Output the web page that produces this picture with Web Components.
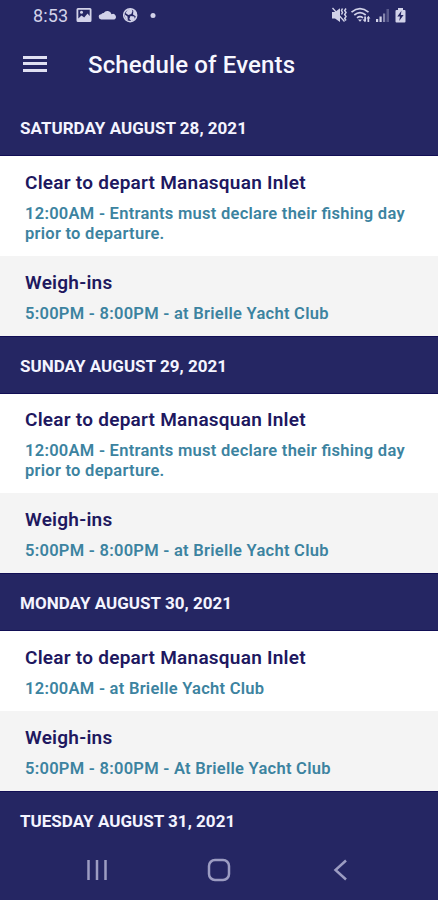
<!DOCTYPE html>
<html lang="en">
<head>
<meta charset="utf-8">
<meta name="viewport" content="width=device-width, initial-scale=1">
<title>Schedule of Events</title>
<style>
  :root {
    --navy: #252663;
    --navy-edge: #120f55;
    --heading: #20185f;
    --detail: #3c83a0;
    --status: #d2d2e9;
    --nav: #9c9cc2;
  }
  body {
    margin: 0;
    background: var(--navy);
    font-family: Roboto, "Liberation Sans", sans-serif;
  }
</style>
</head>
<body>
<app-screen>
  <status-bar slot="top">8:53</status-bar>
  <app-header slot="top">Schedule of Events</app-header>
  <event-list></event-list>
  <nav-bar slot="bottom"></nav-bar>
</app-screen>

<script>
// 1. Data: events for each day
const scheduleData = [
  { day: 'Saturday August 28, 2021', events: [
    { title: 'Clear to depart Manasquan Inlet', detail: '12:00AM - Entrants must declare their fishing day prior to departure.' },
    { title: 'Weigh-ins', detail: '5:00PM - 8:00PM - at Brielle Yacht Club' }
  ] },
  { day: 'Sunday August 29, 2021', events: [
    { title: 'Clear to depart Manasquan Inlet', detail: '12:00AM - Entrants must declare their fishing day prior to departure.' },
    { title: 'Weigh-ins', detail: '5:00PM - 8:00PM - at Brielle Yacht Club' }
  ] },
  { day: 'Monday August 30, 2021', events: [
    { title: 'Clear to depart Manasquan Inlet', detail: '12:00AM - at Brielle Yacht Club' },
    { title: 'Weigh-ins', detail: '5:00PM - 8:00PM - At Brielle Yacht Club' }
  ] },
  { day: 'Tuesday August 31, 2021', events: [] }
];

// 2. Base class: puts the markup in an open shadow root
class BaseElement extends HTMLElement {
  constructor() {
    super();
    this.attachShadow({ mode: 'open' });
    this.shadowRoot.innerHTML = this.constructor.markup;
  }
}

// 3. Screen layout
class AppScreen extends BaseElement {
  static markup = `
    <style>
      :host {
        display: flex;
        flex-direction: column;
        height: 900px;
        overflow: hidden;
        background: var(--navy);
      }
      main { flex: 1; min-height: 0; overflow: hidden; }
    </style>
    <slot name="top"></slot>
    <main><slot></slot></main>
    <slot name="bottom"></slot>
  `;
}
customElements.define('app-screen', AppScreen);

// 4. Status bar
class StatusBar extends BaseElement {
  static markup = `
    <style>
      :host {
        display: flex;
        justify-content: space-between;
        align-items: center;
        height: 31px;
        padding: 0 31px 0 33px;
        box-sizing: border-box;
        color: var(--status);
        font-size: 18px;
        line-height: 31px;
      }
      .group { display: flex; align-items: center; }
      .time { width: 43px; letter-spacing: 0.1px; }
      svg { display: block; fill: currentColor; }
    </style>
    <div class="group">
      <span class="time"><slot></slot></span>
      <svg width="16" height="32" viewBox="0 0 16 32">
        <path fill-rule="evenodd" d="M2 8h12q1.500 0 1.500 1.500v11q0 1.500-1.500 1.500H2q-1.500 0-1.500-1.500v-11q0-1.500 1.500-1.500zM2.300 9.800v8.700l3.200-3 2.700 2 3.300-4 2.200 2.500V9.800z"/>
        <circle cx="5.500" cy="12.300" r="1.500"/>
      </svg>
      <svg width="31" height="32" viewBox="0 0 31 32">
        <path d="M9.500 19.500a2.600 2.600 0 0 1-.3-5.200 3 3 0 0 1 2.500-1.300 4.300 4.300 0 0 1 7.800 1.200 2.700 2.700 0 0 1 2.800 5.300z"/>
      </svg>
      <svg width="16" height="32" viewBox="0 0 16 32">
        <circle cx="7.200" cy="15.200" r="6.500" fill="none" stroke="currentColor" stroke-width="1.500"/>
        <path d="M4.500 10l3.500-1.500 1.500 2.500-1.200 3-3 1L2.500 13zM10.500 9.500l3 3-.5 4-3-2zM1.200 14l3.300 2.500.3 3.800-2-.8zM7.500 16l3.700.5.800 3-3.500 1.800-2.200-2.200z"/>
      </svg>
      <svg width="18" height="32" viewBox="0 0 18 32"><circle cx="14" cy="15.500" r="2.500"/></svg>
    </div>
    <div class="group">
      <svg width="76" height="32" viewBox="0 0 76 32">
        <!-- vibrate -->
        <path d="M1 12h3l5-3.700V22l-5-3.500H1z"/>
        <path d="M1.500 8l12 13.500" stroke="currentColor" stroke-width="1.300"/>
        <path d="M11.500 8.500l-1 2 1 2-1 2M15 8.500l-1.300 2 1.300 2-1.300 2 1.300 2-1.300 2 1.300 2" fill="none" stroke="currentColor" stroke-width="1.500"/>
        <!-- wifi -->
        <g fill="none" stroke="currentColor" stroke-width="1.700">
          <path d="M20.500 12.200q8.500-7 17 0M23.300 15q5.700-4.600 11.400 0M26 17.800q3-2.400 6 0"/>
        </g>
        <path d="M27 19.500h4l-2 2.300z"/>
        <path d="M33.200 16.500v3h-1.700l2.500 2.800 1-1.200v-4.600zM36.500 22v-3.500h-1l1.900-2.700 2 2.700h-1.200V22z"/>
        <!-- signal -->
        <path d="M45 19h2.200v3H45zM48.500 16.500h2.200V22h-2.200z"/>
        <path d="M52 13.500h2.200V22H52z" opacity=".55"/>
        <path d="M55.500 9h2.500v13h-2.500z" opacity=".3"/>
        <!-- battery -->
        <path d="M67 8h5v2h1.500q1 0 1 1v10.500q0 1-1 1h-8q-1 0-1-1V11q0-1 1-1H67z"/>
        <path d="M70.500 10.800l-4.200 5.700H69l-.8 4.500 4.400-6h-2.800z" fill="var(--navy)"/>
      </svg>
    </div>
  `;
}
customElements.define('status-bar', StatusBar);

// 5. Header with the menu button
class AppHeader extends BaseElement {
  static markup = `
    <style>
      :host {
        display: flex;
        align-items: center;
        height: 68px;
        padding-left: 23px;
        color: #f7f7ff;
        font-size: 24px;
        font-weight: 500;
        letter-spacing: 0.14px;
      }
      .menu {
        display: flex;
        flex-direction: column;
        gap: 3.500px;
        width: 23.500px;
        margin-right: 41.500px;
        padding-bottom: 3px;
      }
      .menu i { height: 3px; background: #e0e0f2; }
    </style>
    <div class="menu"><i></i><i></i><i></i></div>
    <slot></slot>
  `;
}
customElements.define('app-header', AppHeader);

// 6. Day band
class DayHeader extends BaseElement {
  static markup = `
    <style>
      :host {
        display: flex;
        align-items: center;
        height: 58px;
        box-sizing: border-box;
        padding: 2px 20px 0;
        background: var(--navy);
        border-top: 1px solid var(--navy-edge);
        border-bottom: 1px solid var(--navy-edge);
        color: #f4f4ff;
        font-size: 17px;
        font-weight: 700;
        letter-spacing: 0.02px;
        text-transform: uppercase;
      }
      :host([first]) { border-top-color: transparent; height: 57px; padding-top: 1px; background-clip: padding-box; }
      :host([last]) { border-bottom-color: transparent; }
    </style>
    <slot></slot>
  `;
}
customElements.define('day-header', DayHeader);

// 7. One event
class EventItem extends BaseElement {
  static markup = `
    <style>
      :host {
        display: block;
        box-sizing: border-box;
        padding: 14.800px 24px 12px 25px;
        background: #fff;
        font-feature-settings: "liga" 1;
      }
      :host([shaded]) { background: #f4f4f4; }
      .title {
        color: var(--heading);
        font-size: 19px;
        font-weight: 600;
        line-height: 24px;
        margin-bottom: 9px;
        letter-spacing: 0.25px;
      }
      .detail {
        color: var(--detail);
        font-size: 16.500px;
        font-weight: 600;
        line-height: 20px;
        letter-spacing: 0.27px;
      }
    </style>
    <div class="title"><slot name="title"></slot></div>
    <div class="detail"><slot></slot></div>
  `;
}
customElements.define('event-item', EventItem);

// 8. The list of days
class EventList extends BaseElement {
  static markup = `
    <style>:host { display: block; }</style>
    <div class="days"></div>
  `;

  connectedCallback() {
    this.shadowRoot.querySelector('.days').innerHTML = scheduleData.map((group, i) => `
      <day-header ${i === 0 ? 'first' : ''} ${i === scheduleData.length - 1 ? 'last' : ''}>${group.day}</day-header>
      ${group.events.map((event, n) => `
        <event-item ${n % 2 ? 'shaded' : ''}><span slot="title">${event.title}</span>${event.detail}</event-item>
      `).join('')}
    `).join('');
  }
}
customElements.define('event-list', EventList);

// 9. Navigation bar
class NavBar extends BaseElement {
  static markup = `
    <style>
      :host {
        display: flex;
        justify-content: space-between;
        align-items: center;
        height: 60px;
        box-sizing: border-box;
        padding: 0 86px 0 85px;
        background: var(--navy);
      }
      svg { display: block; fill: none; stroke: var(--nav); stroke-width: 2.500; }
    </style>
    <svg width="24" height="24" viewBox="0 0 24 24"><path d="M3.500 2v20M12 2v20M20.500 2v20"/></svg>
    <svg width="24" height="24" viewBox="0 0 24 24"><rect x="2" y="2" width="20" height="20" rx="6"/></svg>
    <svg width="24" height="24" viewBox="0 0 24 24"><path d="M18 2.500L7.500 12 18 21.500"/></svg>
  `;
}
customElements.define('nav-bar', NavBar);
</script>
</body>
</html>
